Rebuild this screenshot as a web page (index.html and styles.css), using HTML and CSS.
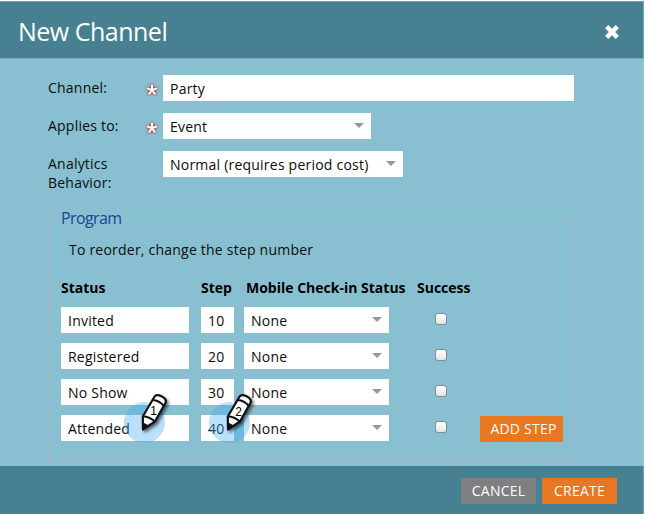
FILE: index.html
```html
<!DOCTYPE html>
<html lang="en">
<head>
<meta charset="utf-8">
<title>New Channel</title>
<link rel="stylesheet" href="styles.css">
</head>
<body>
<main class="dialog">
  <header class="dialog-header">
    <h1>New Channel</h1>
    <svg class="close" width="16" height="16" viewBox="0 0 16 16" role="img" aria-label="Close"><path d="M2.7 2.7L13.3 13.3M13.3 2.7L2.7 13.3"/></svg>
  </header>
  <div class="dialog-body">
    <div class="field">
      <span class="label">Channel:</span>
      <svg class="required" width="16" height="16" viewBox="0 0 16 16"><path d="M8 8V2.8M8 8L13 6.4M8 8L11.1 12.3M8 8L4.9 12.3M8 8L3 6.4"/></svg>
      <div class="box wide">Party</div>
    </div>
    <div class="field">
      <span class="label">Applies to:</span>
      <svg class="required" width="16" height="16" viewBox="0 0 16 16"><path d="M8 8V2.8M8 8L13 6.4M8 8L11.1 12.3M8 8L4.9 12.3M8 8L3 6.4"/></svg>
      <div class="box select event">Event</div>
    </div>
    <div class="field">
      <span class="label">Analytics<br>Behavior:</span>
      <div class="box select cost">Normal (requires period cost)</div>
    </div>
    <section class="program">
      <h2>Program</h2>
      <p class="hint">To reorder, change the step number</p>
      <div class="grid heads">
        <b>Status</b><b>Step</b><b class="mobile">Mobile Check-in Status</b><b class="success">Success</b>
      </div>
      <div class="grid">
        <div class="box">Invited</div><div class="box">10</div><div class="box select">None</div><i class="check"></i>
      </div>
      <div class="grid">
        <div class="box">Registered</div><div class="box">20</div><div class="box select">None</div><i class="check"></i>
      </div>
      <div class="grid">
        <div class="box">No Show</div><div class="box">30</div><div class="box select">None</div><i class="check"></i>
      </div>
      <div class="grid">
        <div class="box">Attended</div><div class="box">40</div><div class="box select">None</div><i class="check"></i>
        <div class="button add">ADD STEP</div>
      </div>
    </section>
  </div>
  <footer class="dialog-footer">
    <div class="button cancel">CANCEL</div>
    <div class="button create">CREATE</div>
  </footer>
  <svg class="marker one" width="60" height="60" viewBox="0 0 60 60">
    <circle class="halo" cx="29.5" cy="32.5" r="20.5"/>
    <g class="pencil">
      <path class="shell" d="M28 39.5L27.8 26.5L39 7.5Q41 3.5 46 6Q52 9 50.6 12.5L40 31.5Z"/>
      <path class="line" d="M37.5 10Q44.5 10.5 48.8 16M27.8 26.5Q34.5 26.5 39.8 31.5"/>
      <path class="tip" d="M28 33L33 35.5L28 39.5Z"/>
    </g>
    <text x="38.5" y="25">1</text>
  </svg>
  <svg class="marker two" width="60" height="60" viewBox="0 0 60 60">
    <circle class="halo" cx="29.5" cy="32.5" r="20.5"/>
    <g class="pencil">
      <path class="shell" d="M28 39.5L27.8 26.5L39 7.5Q41 3.5 46 6Q52 9 50.6 12.5L40 31.5Z"/>
      <path class="line" d="M37.5 10Q44.5 10.5 48.8 16M27.8 26.5Q34.5 26.5 39.8 31.5"/>
      <path class="tip" d="M28 33L33 35.5L28 39.5Z"/>
    </g>
    <text x="38.5" y="26">2</text>
  </svg>
</main>
</body>
</html>
```
FILE: styles.css
```css
* { box-sizing: border-box; }
body {
  margin: 0;
  background: #fff;
  color: #0c0c0c;
  font: 14px/19px "Open Sans", "Noto Sans", sans-serif;
  letter-spacing: .22px;
}
.dialog {
  position: relative;
  display: flex;
  flex-direction: column;
  width: 644px;
  height: 514px;
  padding-top: 1px;
  overflow: hidden;
}
.dialog-header {
  display: flex;
  justify-content: space-between;
  height: 58px;
  padding: 0 23px 0 18px;
  background: #468091;
  border-top: 1px solid #6ba3b3;
  border-right: 1px solid #78adbc;
  border-bottom: 1px solid #70acbc;
}
h1 {
  margin: 12px 0 0;
  color: #fff;
  font-size: 25px;
  line-height: 34px;
  font-weight: 400;
  letter-spacing: -.5px;
}
.close { margin-top: 22px; }
.close path { fill: none; stroke: #fff; stroke-width: 4.6; }
.dialog-body {
  height: 407px;
  padding: 16px 0 0 48px;
  background: #88c0d2;
  border-right: 1px solid #9acbda;
}
.field {
  display: flex;
  height: 38px;
}
.label { width: 97px; margin-top: 3px; }
.required {
  width: 16px;
  margin: 7px 3px 0 -1px;
  overflow: visible;
  filter: drop-shadow(0 0 1px #b44b50) drop-shadow(0 0 1px #b44b50);
}
.required path { fill: none; stroke: #fff; stroke-width: 2; }
.box {
  position: relative;
  height: 26px;
  padding: 0 7px;
  background: #fff;
  line-height: 28px;
  white-space: nowrap;
}
.wide { width: 411px; }
.event { width: 208px; }
.cost { width: 240px; margin-left: 18px; }
.select::after {
  content: "";
  position: absolute;
  top: 10px;
  right: 7px;
  border: 5px solid transparent;
  border-top: 5px solid #999;
  border-bottom: 0;
}
.program {
  width: 526px;
  height: 244px;
  margin-top: 28px;
  padding-left: 12px;
  border: 1px solid #a9b1c6;
}
h2 {
  width: 68px;
  height: 20px;
  margin: -11px 0 0 -4px;
  padding: 0 4px;
  background: #88c0d2;
  color: #174594;
  font-size: 16px;
  line-height: 22px;
  font-weight: 400;
  letter-spacing: -.6px;
}
.hint { margin: 13px 0 19px 8px; }
.grid {
  display: grid;
  grid-template-columns: 128px 33px 145px 12px 83px;
  column-gap: 12px;
  height: 36px;
}
.grid > :nth-child(3) { margin-left: -2px; width: 145px; }
.check {
  width: 12px;
  height: 12px;
  margin: 6px 0 0 32px;
  border: 1px solid #7e8d94;
  border-radius: 3px;
  background: linear-gradient(#fff, #e5e5e5);
}
.heads {
  height: 29px;
  color: #000;
  letter-spacing: 0;
  white-space: nowrap;
}
.grid > .mobile { margin-left: 0; }
.success { margin-left: 14px; }
.button {
  height: 26px;
  color: #fff;
  line-height: 26px;
  text-align: center;
}
.add {
  width: 83px;
  margin: 1px 0 0 53px;
  padding-left: 4px;
  background: #e87722;
}
.dialog-footer {
  display: flex;
  justify-content: flex-end;
  gap: 6px;
  height: 48px;
  padding: 12px 26px 0 0;
  background: #468091;
  border-right: 1px solid #6ba3b3;
}
.cancel { width: 75px; background: #7e7f80; }
.create { width: 75px; background: #e87722; }
.marker { position: absolute; top: 390px; overflow: visible; }
.one { left: 115px; }
.two { left: 200px; }
.halo { fill: #3fa9f5; opacity: .36; }
.pencil { filter: drop-shadow(2px 2px 1.5px rgba(0, 0, 0, .55)); }
.shell { fill: #fff; stroke: #111; stroke-width: 2.2; stroke-linejoin: round; }
.line { fill: none; stroke: #111; stroke-width: 2; }
.tip { fill: #111; stroke: #111; }
.marker text {
  fill: #000;
  font: 12px "Liberation Sans", sans-serif;
  letter-spacing: 0;
  text-anchor: middle;
}
```
